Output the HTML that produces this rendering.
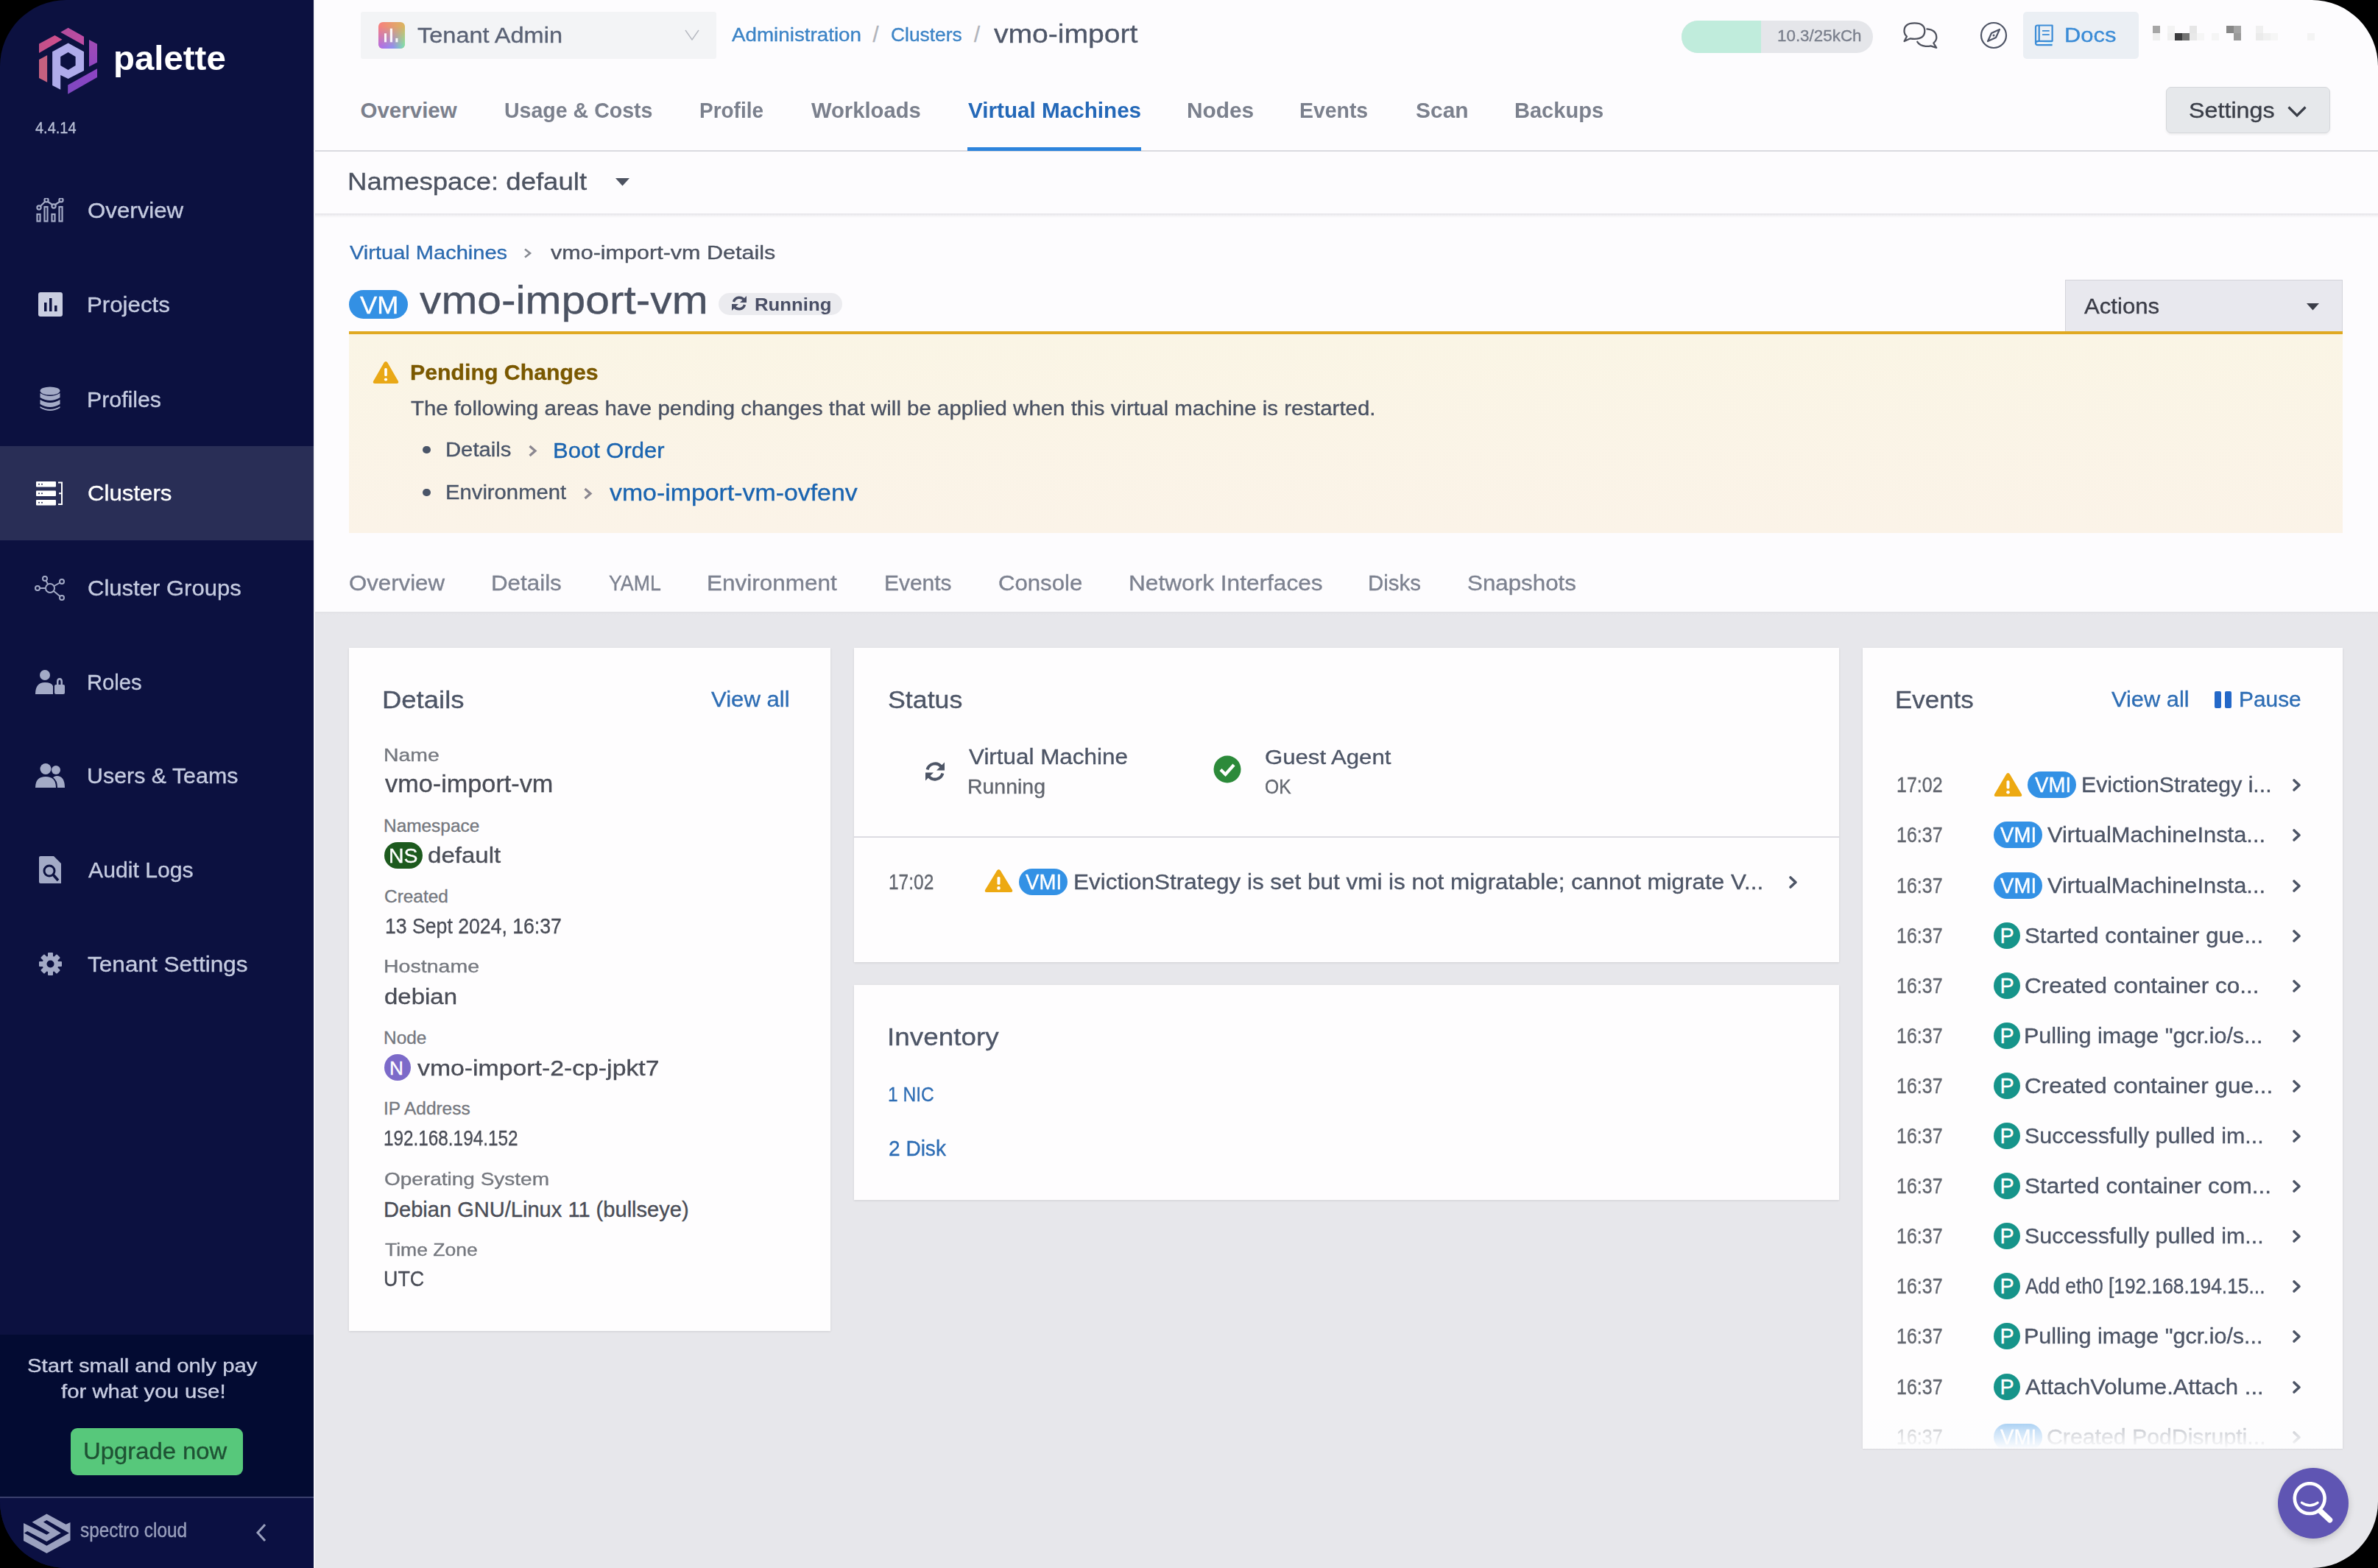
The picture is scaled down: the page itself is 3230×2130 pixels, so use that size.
<!DOCTYPE html>
<html><head><meta charset="utf-8"><style>
html,body{margin:0;padding:0;background:#000;width:3230px;height:2130px;overflow:hidden}
#win{position:absolute;left:0;top:0;width:3230px;height:2130px;border-radius:90px;overflow:hidden}
.t{position:absolute;white-space:pre;line-height:1;font-family:"Liberation Sans", sans-serif;transform-origin:0 0;-webkit-text-stroke:0.35px currentColor}
</style></head><body><div id="win">
<div style="position:absolute;left:426px;top:0px;width:2804px;height:204px;background:#fdfcfe"></div>
<div style="position:absolute;left:426px;top:204px;width:2804px;height:2px;background:#dadae0"></div>
<div style="position:absolute;left:426px;top:206px;width:2804px;height:84px;background:#fdfcfe"></div>
<div style="position:absolute;left:426px;top:290px;width:2804px;height:6px;background:linear-gradient(#e3e2e7,#f3f2f5 50%,#fdfcfe)"></div>
<div style="position:absolute;left:426px;top:296px;width:2804px;height:535px;background:#fdfcfe"></div>
<div style="position:absolute;left:426px;top:831px;width:2804px;height:1299px;background:#e7e7eb"></div>
<div style="position:absolute;left:426px;top:831px;width:2804px;height:4px;background:linear-gradient(#e1e1e5,#e7e7eb)"></div>
<div style="position:absolute;left:0px;top:0px;width:426px;height:2130px;background:#0c1140"></div>
<div style="position:absolute;left:426px;top:0px;width:1.5px;height:2130px;background:#f4f4f6"></div>
<div style="position:absolute;left:0px;top:606px;width:426px;height:128px;background:#292e56"></div>
<div style="position:absolute;left:0px;top:1813px;width:426px;height:220px;background:#030b32"></div>
<div style="position:absolute;left:0px;top:2033px;width:426px;height:2px;background:#3a3f6c"></div>
<div style="position:absolute;left:0px;top:2035px;width:426px;height:95px;background:#0b1042"></div>
<svg style="position:absolute;left:52px;top:37px;" width="80" height="92" viewBox="0 0 80 92">
<defs>
<linearGradient id="lgA" x1="0" y1="0" x2="1" y2="0"><stop offset="0" stop-color="#c25088"/><stop offset="1" stop-color="#d24f8e"/></linearGradient>
<linearGradient id="lgB" x1="0" y1="0" x2="1" y2="0"><stop offset="0" stop-color="#b24d9c"/><stop offset="1" stop-color="#bf4ca4"/></linearGradient>
<linearGradient id="lgC" x1="0" y1="0" x2="0" y2="1"><stop offset="0" stop-color="#a24cb4"/><stop offset="1" stop-color="#9046c0"/></linearGradient>
<linearGradient id="lgD" x1="0" y1="1" x2="1" y2="0"><stop offset="0" stop-color="#7e48c0"/><stop offset="1" stop-color="#8e44c4"/></linearGradient>
</defs>
<polygon points="1,22.5 22.5,11.1 32.5,16.8 1,34.9" fill="url(#lgA)"/>
<polygon points="30.2,6.7 40.6,0.7 62,12.8 62,24.5" fill="url(#lgB)"/>
<polygon points="69,17.1 80.1,22.8 80.1,47.6 69,53.6" fill="url(#lgC)"/>
<polygon points="40.2,78.4 80.1,56.3 80.1,68 40.2,90.8" fill="url(#lgD)"/>
<polygon points="1,43.9 12.1,37.9 12.1,74.7 1,69" fill="#c5607f"/>
<path d="M19.1,33.2 L40.6,21.5 L62,33.2 L62,59 L40.6,70 L30.2,65 L30.2,84.8 L19.1,79.1 Z M30.2,39.9 L40.6,33.9 L50.6,39.9 L50.6,52 L40.6,58 L30.2,52 Z" fill="#afabea" fill-rule="evenodd"/>
</svg>
<svg style="position:absolute;left:49px;top:269px;" width="38" height="33" viewBox="0 0 38 33"><g fill="none" stroke="#a3aac6" stroke-width="2.2">
<circle cx="4" cy="13" r="2.6"/><circle cx="14" cy="2.8" r="2.6"/><circle cx="24" cy="11" r="2.6"/><circle cx="34" cy="2.8" r="2.6"/>
<path d="M6,11 L12,5 M16,5 L22,9 M26,9 L32,5"/>
<rect x="1.5" y="22" width="4" height="9.5"/><rect x="11.5" y="12" width="4" height="19.5"/><rect x="21.5" y="22" width="4" height="9.5"/><rect x="31.5" y="12" width="4" height="19.5"/></g></svg>
<svg style="position:absolute;left:52px;top:397px;" width="33" height="33" viewBox="0 0 33 33"><rect x="0" y="0" width="33" height="33" rx="3" fill="#c9cde0"/>
<rect x="8" y="14" width="3.5" height="12" fill="#0c1140"/><rect x="15" y="8" width="3.5" height="18" fill="#0c1140"/><rect x="22" y="18" width="3.5" height="8" fill="#0c1140"/></svg>
<svg style="position:absolute;left:54px;top:525px;" width="28" height="34" viewBox="0 0 28 34"><g fill="#a3aac6">
<ellipse cx="14" cy="6" rx="13.5" ry="5.5"/>
<path d="M0.5,9 Q14,17 27.5,9 L27.5,15 Q14,23 0.5,15 Z"/>
<path d="M0.5,18 Q14,26 27.5,18 L27.5,24 Q14,32 0.5,24 Z"/>
<path d="M0.5,27 Q14,35 27.5,27 L27.5,29 Q14,37 0.5,29 Z"/></g></svg>
<svg style="position:absolute;left:49px;top:654px;" width="38" height="33" viewBox="0 0 38 33"><g fill="#ffffff">
<rect x="0" y="0" width="27" height="7.5" rx="1"/><rect x="0" y="12.5" width="27" height="7.5" rx="1"/><rect x="0" y="25" width="27" height="7.5" rx="1"/>
</g><g fill="#292e56"><circle cx="4" cy="3.8" r="1"/><circle cx="8" cy="3.8" r="1"/><circle cx="4" cy="16.3" r="1"/><circle cx="8" cy="16.3" r="1"/><circle cx="4" cy="28.8" r="1"/><circle cx="8" cy="28.8" r="1"/></g>
<path d="M30,1.5 L35,1.5 L35,31 L30,31 M35,16.3 L31,16.3" fill="none" stroke="#fff" stroke-width="2"/></svg>
<svg style="position:absolute;left:47px;top:782px;" width="42" height="34" viewBox="0 0 42 34"><g fill="none" stroke="#a3aac6" stroke-width="2">
<circle cx="21" cy="17" r="6"/><circle cx="14" cy="4" r="3"/><circle cx="37" cy="8" r="3"/><circle cx="4" cy="17" r="3"/><circle cx="37" cy="30" r="3"/>
<path d="M15.5,6.8 L18,11.5 M34.5,9.5 L26.5,14 M7,17 L15,17 M34.5,28 L26,21"/></g></svg>
<svg style="position:absolute;left:48px;top:910px;" width="40" height="33" viewBox="0 0 40 33"><g fill="#a3aac6">
<circle cx="13" cy="7" r="7"/><path d="M0,33 Q0,17 13,17 Q22,17 24,22 L24,33 Z"/>
<rect x="26" y="20" width="14" height="13" rx="2"/><path d="M29,20 L29,16 Q29,11 33,11 Q37,11 37,16 L37,20 L34.5,20 L34.5,16 Q34.5,13.5 33,13.5 Q31.5,13.5 31.5,16 L31.5,20 Z"/></g></svg>
<svg style="position:absolute;left:48px;top:1037px;" width="40" height="33" viewBox="0 0 40 33"><g fill="#a3aac6">
<circle cx="14" cy="7.5" r="7.5"/><circle cx="28" cy="9" r="6"/>
<path d="M0,33 Q0,18 14,18 Q28,18 28,33 Z"/><path d="M24,19 Q27,17 29,17 Q40,17 40,33 L30,33 Q30,23 24,19 Z"/></g></svg>
<svg style="position:absolute;left:53px;top:1163px;" width="30" height="37" viewBox="0 0 30 37"><path d="M2,0 L20,0 L30,10 L30,37 L2,37 Q0,37 0,35 L0,2 Q0,0 2,0 Z" fill="#a3aac6"/>
<circle cx="14" cy="20" r="7" fill="none" stroke="#0c1140" stroke-width="3"/><path d="M19,25 L26,33" stroke="#0c1140" stroke-width="3.5"/></svg>
<svg style="position:absolute;left:53px;top:1294px;" width="31" height="31" viewBox="0 0 31 31"><g fill="#a3aac6" transform="translate(15.5,15.5)">
<circle r="11"/>
<g id="t"><rect x="-3.5" y="-15.5" width="7" height="8" rx="1"/></g>
<rect x="-3.5" y="-15.5" width="7" height="8" rx="1" transform="rotate(45)"/>
<rect x="-3.5" y="-15.5" width="7" height="8" rx="1" transform="rotate(90)"/>
<rect x="-3.5" y="-15.5" width="7" height="8" rx="1" transform="rotate(135)"/>
<rect x="-3.5" y="-15.5" width="7" height="8" rx="1" transform="rotate(180)"/>
<rect x="-3.5" y="-15.5" width="7" height="8" rx="1" transform="rotate(225)"/>
<rect x="-3.5" y="-15.5" width="7" height="8" rx="1" transform="rotate(270)"/>
<rect x="-3.5" y="-15.5" width="7" height="8" rx="1" transform="rotate(315)"/>
<circle r="5" fill="#0c1140"/></g></svg>
<div style="position:absolute;left:96px;top:1940px;width:234px;height:64px;background:#57c87b;border-radius:9px"></div>
<svg style="position:absolute;left:28px;top:2052px;" width="72" height="63" viewBox="0 0 72 63"><polygon fill="#9ba1bf" points="4,16.1 15.1,16.1 35.4,4.6 61.5,18.7 67.5,16.1 67.5,40.6 35.4,57.9 4,41"/>
<polygon fill="#0b1042" points="3,15.6 15.1,15.6 39.6,30.1 35.4,32.7 3,16.5"/>
<polygon fill="#0b1042" points="30.9,15.5 35.4,13.1 65.9,30.5 35.4,47.8 4.8,30.5 9.2,28.1 35.4,42 54.8,30.5"/></svg>
<svg style="position:absolute;left:347px;top:2069px;" width="16" height="26" viewBox="0 0 16 26"><path d="M13,2 L3,13 L13,24" fill="none" stroke="#9aa0bd" stroke-width="3"/></svg>
<div style="position:absolute;left:490px;top:16px;width:483px;height:64px;background:#f3f4f6;border-radius:3px"></div>
<svg style="position:absolute;left:514px;top:30px;" width="36" height="36" viewBox="0 0 36 36"><defs><linearGradient id="tgT" x1="0" y1="0" x2="1" y2="0"><stop offset="0" stop-color="#f7807f"/><stop offset="1" stop-color="#d9b660"/></linearGradient>
<linearGradient id="tgB" x1="0" y1="0" x2="1" y2="0"><stop offset="0" stop-color="#b46ae6"/><stop offset="0.55" stop-color="#8f90ee"/><stop offset="1" stop-color="#7ae6aa"/></linearGradient>
<linearGradient id="tgM" x1="0" y1="0" x2="0" y2="1"><stop offset="0.15" stop-color="#000"/><stop offset="0.95" stop-color="#fff"/></linearGradient>
<mask id="tmask"><rect width="36" height="36" fill="url(#tgM)"/></mask></defs>
<rect width="36" height="36" rx="6" fill="url(#tgT)"/><rect width="36" height="36" rx="6" fill="url(#tgB)" mask="url(#tmask)"/>
<rect x="8" y="15.3" width="3" height="12" fill="#fff" opacity="0.92"/><rect x="15.8" y="8.7" width="3.2" height="18.6" fill="#fff" opacity="0.92"/><rect x="23.4" y="21.9" width="3" height="5.4" fill="#fff" opacity="0.92"/></svg>
<svg style="position:absolute;left:930px;top:40px;" width="20" height="15" viewBox="0 0 20 15"><path d="M1,1 L10,14 L19,1" fill="none" stroke="#b5b8c0" stroke-width="1.4"/></svg>
<div style="position:absolute;left:2284px;top:28px;width:260px;height:44px;background:#e5e6ea;border-radius:22px;overflow:hidden"></div>
<div style="position:absolute;left:2284px;top:28px;width:108px;height:44px;background:#c0ecdc;border-radius:22px 0 0 22px"></div>
<svg style="position:absolute;left:2585px;top:29px;" width="48" height="38" viewBox="0 0 48 38"><g fill="none" stroke="#50535f" stroke-width="2.3" stroke-linejoin="round" stroke-linecap="round">
<path d="M5,20.5 Q1.5,17.5 1.5,13 Q1.5,2.3 15.5,2.3 Q29.3,2.3 29.3,13 Q29.3,23.8 15.5,23.8 Q12.5,23.8 9.8,23.3 L1.6,27 Z"/>
<path d="M32.4,10.3 Q45.3,11.5 45.3,22 Q45.3,26 41.3,29.5 L45.2,35.8 L37.5,33.3 Q34,34.2 30.5,33.8 Q22.5,33 19.3,27.8"/></g></svg>
<svg style="position:absolute;left:2689px;top:29px;" width="38" height="38" viewBox="0 0 38 38"><circle cx="19" cy="19" r="17" fill="none" stroke="#4f5566" stroke-width="2.2"/>
<path d="M27,11 L22,22 L11,27 L16,16 Z" fill="none" stroke="#4f5566" stroke-width="2.2" stroke-linejoin="round"/><circle cx="19" cy="19" r="1.5" fill="#4f5566"/></svg>
<div style="position:absolute;left:2748px;top:16px;width:157px;height:64px;background:#ebeff4;border-radius:5px"></div>
<svg style="position:absolute;left:2763px;top:33px;" width="27" height="30" viewBox="0 0 27 30"><path d="M6.7,22.8 L24.6,22.8 L24.6,27.5" fill="#c9ecfb" stroke="none"/><g fill="none" stroke="#3a8bd6" stroke-width="2.2" stroke-linejoin="round">
<path d="M4.5,1.5 L24.6,1.5 L24.6,22.8 L6,22.8 Q2,22.8 2,25.5 Q2,28.1 5,28.1 L24.6,28.1 M2,25.5 L2,4 Q2,1.5 4.5,1.5"/>
<path d="M6.7,1.5 L6.7,22.8"/><path d="M11,8.8 L20.7,8.8 M11,14.1 L20.7,14.1" stroke-width="1.8"/></g></svg>
<div style="position:absolute;left:2924px;top:35px;width:10px;height:10px;background:#a6a6a6"></div>
<div style="position:absolute;left:2924px;top:45px;width:10px;height:10px;background:#efefef"></div>
<div style="position:absolute;left:2944px;top:35px;width:10px;height:10px;background:#f3f3f3"></div>
<div style="position:absolute;left:2944px;top:45px;width:10px;height:10px;background:#f0f0f0"></div>
<div style="position:absolute;left:2954px;top:45px;width:10px;height:10px;background:#3c3c3e"></div>
<div style="position:absolute;left:2964px;top:45px;width:10px;height:10px;background:#737373"></div>
<div style="position:absolute;left:2974px;top:35px;width:10px;height:10px;background:#e6e6e6"></div>
<div style="position:absolute;left:2974px;top:45px;width:10px;height:10px;background:#e9e9e9"></div>
<div style="position:absolute;left:2984px;top:45px;width:10px;height:10px;background:#f6f6f6"></div>
<div style="position:absolute;left:3004px;top:45px;width:10px;height:10px;background:#f5f5f5"></div>
<div style="position:absolute;left:3024px;top:35px;width:10px;height:10px;background:#878787"></div>
<div style="position:absolute;left:3034px;top:35px;width:10px;height:10px;background:#a4a4a4"></div>
<div style="position:absolute;left:3034px;top:45px;width:10px;height:10px;background:#9a9a9a"></div>
<div style="position:absolute;left:3064px;top:35px;width:10px;height:10px;background:#f0f0f0"></div>
<div style="position:absolute;left:3064px;top:45px;width:10px;height:10px;background:#ebebeb"></div>
<div style="position:absolute;left:3074px;top:45px;width:10px;height:10px;background:#f1f1f1"></div>
<div style="position:absolute;left:3084px;top:45px;width:10px;height:10px;background:#f6f6f6"></div>
<div style="position:absolute;left:3134px;top:45px;width:10px;height:10px;background:#f4f4f4"></div>
<div style="position:absolute;left:1314px;top:200px;width:236px;height:5px;background:#2d84dc"></div>
<div style="position:absolute;left:2942px;top:118px;width:223px;height:63px;background:#e6e8eb;border:1.5px solid #d5d7db;border-radius:7px;box-sizing:border-box;box-shadow:0 2px 3px rgba(0,0,0,0.06)"></div>
<svg style="position:absolute;left:3106px;top:143px;" width="28" height="17" viewBox="0 0 28 17"><path d="M2.5,2.5 L14,14 L25.5,2.5" fill="none" stroke="#3a3e48" stroke-width="3.2"/></svg>
<svg style="position:absolute;left:836px;top:242px;" width="20" height="11" viewBox="0 0 20 11"><path d="M0,0 L19,0 L9.5,10.5 Z" fill="#4d5361"/></svg>
<svg style="position:absolute;left:711px;top:337px;" width="12" height="14" viewBox="0 0 12 14"><path d="M2,1.5 L9,7 L2,12.5" fill="none" stroke="#888b93" stroke-width="2.6"/></svg>
<div style="position:absolute;left:474px;top:394px;width:80px;height:39px;background:#3390e4;border-radius:20px"></div>
<div style="position:absolute;left:976px;top:398px;width:168px;height:30px;background:#ebebef;border-radius:15px"></div>
<svg style="position:absolute;left:992px;top:400px;" width="24" height="24" viewBox="0 0 24 24"><g fill="none" stroke="#4a4f66" stroke-width="3.4"><path d="M4.5,10 A8,8 0 0 1 19,8"/><path d="M19.5,14 A8,8 0 0 1 5,16"/></g>
<path d="M22,2 L22,11 L13,11 Z" fill="#4a4f66"/><path d="M2,22 L2,13 L11,13 Z" fill="#4a4f66"/></svg>
<div style="position:absolute;left:2805px;top:380px;width:377px;height:74px;background:#e8e8ee;border:1.5px solid #d3d3da;border-bottom:none;box-sizing:border-box"></div>
<svg style="position:absolute;left:3133px;top:412px;" width="18" height="10" viewBox="0 0 18 10"><path d="M0,0 L17,0 L8.5,9.5 Z" fill="#3b3d48"/></svg>
<div style="position:absolute;left:474px;top:450px;width:2708px;height:4.5px;background:#e0a920"></div>
<div style="position:absolute;left:474px;top:454px;width:2708px;height:270px;background:linear-gradient(#faf5e5,#fbf3e8)"></div>
<svg style="position:absolute;left:506px;top:490px;" width="36" height="32" viewBox="0 0 36 32"><path d="M18,1 Q19.5,1 20.5,2.8 L35,28 Q36,31 33,31 L3,31 Q0,31 1,28 L15.5,2.8 Q16.5,1 18,1 Z" fill="#e9a816"/>
<rect x="16.2" y="10" width="3.6" height="11" rx="1.5" fill="#fff"/><circle cx="18" cy="25.5" r="2.1" fill="#fff"/></svg>
<div style="position:absolute;left:574px;top:605.8px;width:10.5px;height:10.5px;background:#4a5568;border-radius:50%"></div>
<div style="position:absolute;left:574px;top:663.5px;width:10.5px;height:10.5px;background:#4a5568;border-radius:50%"></div>
<svg style="position:absolute;left:717px;top:604px;" width="13" height="17" viewBox="0 0 13 17"><path d="M2.5,2 L10,8.5 L2.5,15" fill="none" stroke="#8b8790" stroke-width="3.2"/></svg>
<svg style="position:absolute;left:792px;top:662px;" width="13" height="17" viewBox="0 0 13 17"><path d="M2.5,2 L10,8.5 L2.5,15" fill="none" stroke="#8b8790" stroke-width="3.2"/></svg>
<div style="position:absolute;left:474px;top:880px;width:654px;height:928px;background:#fefdfe;box-shadow:0 1px 3px rgba(0,0,0,0.10)"></div>
<div style="position:absolute;left:1160px;top:880px;width:1338px;height:427px;background:#fefdfe;box-shadow:0 1px 3px rgba(0,0,0,0.10)"></div>
<div style="position:absolute;left:1160px;top:1338px;width:1338px;height:292px;background:#fefdfe;box-shadow:0 1px 3px rgba(0,0,0,0.10)"></div>
<div style="position:absolute;left:2530px;top:880px;width:652px;height:1088px;background:#fefdfe;box-shadow:0 1px 3px rgba(0,0,0,0.10)"></div>
<div style="position:absolute;left:522px;top:1144px;width:52px;height:36px;background:#1d5a1e;border-radius:18px"></div>
<div style="position:absolute;left:522px;top:1432px;width:36px;height:36px;background:#7c6ac9;border-radius:50%"></div>
<svg style="position:absolute;left:1255px;top:1033px;" width="30" height="30" viewBox="0 0 30 30"><g fill="none" stroke="#4d5566" stroke-width="4"><path d="M4.6,12.5 A10.8,10.8 0 0 1 23.5,8.5"/><path d="M25.4,17.5 A10.8,10.8 0 0 1 6.5,21.5"/></g>
<path d="M28,2.5 L28,13.5 L17,13.5 Z" fill="#4d5566"/><path d="M2,27.5 L2,16.5 L13,16.5 Z" fill="#4d5566"/></svg>
<svg style="position:absolute;left:1648px;top:1026px;" width="38" height="38" viewBox="0 0 38 38"><circle cx="19" cy="19" r="18.5" fill="#2c8a3a"/><path d="M10,19.5 L16.5,26 L28,13" fill="none" stroke="#fff" stroke-width="4.2"/></svg>
<div style="position:absolute;left:1160px;top:1136px;width:1338px;height:2px;background:#dcdce2"></div>
<svg style="position:absolute;left:1337px;top:1180px;" width="39" height="33" viewBox="0 0 39 33"><path d="M19.5,1 Q21.0,1 22.0,2.8 L38,29 Q39,32 36,32 L3,32 Q0,32 1,29 L17.0,2.8 Q18.0,1 19.5,1 Z" fill="#eda912"/>
<rect x="17.5" y="10.89" width="4" height="10.89" rx="1.6" fill="#fff"/><circle cx="19.5" cy="26.400000000000002" r="2.3" fill="#fff"/></svg>
<div style="position:absolute;left:1384px;top:1180px;width:66px;height:36px;background:#3391e5;border-radius:18px"></div>
<svg style="position:absolute;left:2428px;top:1189px;" width="15" height="19" viewBox="0 0 15 19"><path d="M4,3 L11,9.5 L4,16" fill="none" stroke="#4d5566" stroke-width="3.6" stroke-linecap="round" stroke-linejoin="round"/></svg>
<div style="position:absolute;left:3008px;top:939px;width:9px;height:23px;background:#2468c8;border-radius:2px"></div>
<div style="position:absolute;left:3022px;top:939px;width:9px;height:23px;background:#2468c8;border-radius:2px"></div>
<svg style="position:absolute;left:2708px;top:1049.3px;" width="39" height="34" viewBox="0 0 39 34"><path d="M19.5,1 Q21.0,1 22.0,2.8 L38,30 Q39,33 36,33 L3,33 Q0,33 1,30 L17.0,2.8 Q18.0,1 19.5,1 Z" fill="#eda912"/>
<rect x="17.5" y="11.22" width="4" height="11.22" rx="1.6" fill="#fff"/><circle cx="19.5" cy="27.200000000000003" r="2.3" fill="#fff"/></svg>
<div style="position:absolute;left:2754px;top:1048.3px;width:66px;height:36px;background:#3391e5;border-radius:18px"></div>
<svg style="position:absolute;left:3112px;top:1057.3px;" width="15" height="19" viewBox="0 0 15 19"><path d="M4,3 L11,9.5 L4,16" fill="none" stroke="#4d5566" stroke-width="3.6" stroke-linecap="round" stroke-linejoin="round"/></svg>
<div style="position:absolute;left:2707.6px;top:1116.3999999999999px;width:66px;height:36px;background:#3391e5;border-radius:18px"></div>
<svg style="position:absolute;left:3112px;top:1125.3999999999999px;" width="15" height="19" viewBox="0 0 15 19"><path d="M4,3 L11,9.5 L4,16" fill="none" stroke="#4d5566" stroke-width="3.6" stroke-linecap="round" stroke-linejoin="round"/></svg>
<div style="position:absolute;left:2707.6px;top:1184.5px;width:66px;height:36px;background:#3391e5;border-radius:18px"></div>
<svg style="position:absolute;left:3112px;top:1193.5px;" width="15" height="19" viewBox="0 0 15 19"><path d="M4,3 L11,9.5 L4,16" fill="none" stroke="#4d5566" stroke-width="3.6" stroke-linecap="round" stroke-linejoin="round"/></svg>
<div style="position:absolute;left:2707.6px;top:1252.6px;width:36px;height:36px;background:#16948a;border-radius:50%"></div>
<svg style="position:absolute;left:3112px;top:1261.6px;" width="15" height="19" viewBox="0 0 15 19"><path d="M4,3 L11,9.5 L4,16" fill="none" stroke="#4d5566" stroke-width="3.6" stroke-linecap="round" stroke-linejoin="round"/></svg>
<div style="position:absolute;left:2707.6px;top:1320.6999999999998px;width:36px;height:36px;background:#16948a;border-radius:50%"></div>
<svg style="position:absolute;left:3112px;top:1329.6999999999998px;" width="15" height="19" viewBox="0 0 15 19"><path d="M4,3 L11,9.5 L4,16" fill="none" stroke="#4d5566" stroke-width="3.6" stroke-linecap="round" stroke-linejoin="round"/></svg>
<div style="position:absolute;left:2707.6px;top:1388.8px;width:36px;height:36px;background:#16948a;border-radius:50%"></div>
<svg style="position:absolute;left:3112px;top:1397.8px;" width="15" height="19" viewBox="0 0 15 19"><path d="M4,3 L11,9.5 L4,16" fill="none" stroke="#4d5566" stroke-width="3.6" stroke-linecap="round" stroke-linejoin="round"/></svg>
<div style="position:absolute;left:2707.6px;top:1456.8999999999999px;width:36px;height:36px;background:#16948a;border-radius:50%"></div>
<svg style="position:absolute;left:3112px;top:1465.8999999999999px;" width="15" height="19" viewBox="0 0 15 19"><path d="M4,3 L11,9.5 L4,16" fill="none" stroke="#4d5566" stroke-width="3.6" stroke-linecap="round" stroke-linejoin="round"/></svg>
<div style="position:absolute;left:2707.6px;top:1525.0px;width:36px;height:36px;background:#16948a;border-radius:50%"></div>
<svg style="position:absolute;left:3112px;top:1534.0px;" width="15" height="19" viewBox="0 0 15 19"><path d="M4,3 L11,9.5 L4,16" fill="none" stroke="#4d5566" stroke-width="3.6" stroke-linecap="round" stroke-linejoin="round"/></svg>
<div style="position:absolute;left:2707.6px;top:1593.1px;width:36px;height:36px;background:#16948a;border-radius:50%"></div>
<svg style="position:absolute;left:3112px;top:1602.1px;" width="15" height="19" viewBox="0 0 15 19"><path d="M4,3 L11,9.5 L4,16" fill="none" stroke="#4d5566" stroke-width="3.6" stroke-linecap="round" stroke-linejoin="round"/></svg>
<div style="position:absolute;left:2707.6px;top:1661.1999999999998px;width:36px;height:36px;background:#16948a;border-radius:50%"></div>
<svg style="position:absolute;left:3112px;top:1670.1999999999998px;" width="15" height="19" viewBox="0 0 15 19"><path d="M4,3 L11,9.5 L4,16" fill="none" stroke="#4d5566" stroke-width="3.6" stroke-linecap="round" stroke-linejoin="round"/></svg>
<div style="position:absolute;left:2707.6px;top:1729.3px;width:36px;height:36px;background:#16948a;border-radius:50%"></div>
<svg style="position:absolute;left:3112px;top:1738.3px;" width="15" height="19" viewBox="0 0 15 19"><path d="M4,3 L11,9.5 L4,16" fill="none" stroke="#4d5566" stroke-width="3.6" stroke-linecap="round" stroke-linejoin="round"/></svg>
<div style="position:absolute;left:2707.6px;top:1797.3999999999999px;width:36px;height:36px;background:#16948a;border-radius:50%"></div>
<svg style="position:absolute;left:3112px;top:1806.3999999999999px;" width="15" height="19" viewBox="0 0 15 19"><path d="M4,3 L11,9.5 L4,16" fill="none" stroke="#4d5566" stroke-width="3.6" stroke-linecap="round" stroke-linejoin="round"/></svg>
<div style="position:absolute;left:2707.6px;top:1865.5px;width:36px;height:36px;background:#16948a;border-radius:50%"></div>
<svg style="position:absolute;left:3112px;top:1874.5px;" width="15" height="19" viewBox="0 0 15 19"><path d="M4,3 L11,9.5 L4,16" fill="none" stroke="#4d5566" stroke-width="3.6" stroke-linecap="round" stroke-linejoin="round"/></svg>
<div style="position:absolute;left:2707.6px;top:1933.6px;width:66px;height:36px;background:#3391e5;border-radius:18px"></div>
<svg style="position:absolute;left:3112px;top:1942.6px;" width="15" height="19" viewBox="0 0 15 19"><path d="M4,3 L11,9.5 L4,16" fill="none" stroke="#4d5566" stroke-width="3.6" stroke-linecap="round" stroke-linejoin="round"/></svg>
<span class="t" style="left:154.0px;top:55.7px;font-size:46.75px;font-weight:700;color:#ffffff;transform:scaleX(1.0137);-webkit-text-stroke:0">palette</span>
<span class="t" style="left:48.0px;top:163.0px;font-size:22.53px;font-weight:400;color:#b8bfd6;transform:scaleX(0.8871)">4.4.14</span>
<span class="t" style="left:119.3px;top:271.0px;font-size:29.65px;font-weight:400;color:#c5cbe0;transform:scaleX(1.0537)">Overview</span>
<span class="t" style="left:118.3px;top:399.0px;font-size:29.65px;font-weight:400;color:#c5cbe0;transform:scaleX(1.0538)">Projects</span>
<span class="t" style="left:118.4px;top:527.6px;font-size:29.65px;font-weight:400;color:#c5cbe0;transform:scaleX(1.0219)">Profiles</span>
<span class="t" style="left:119.3px;top:655.3px;font-size:29.65px;font-weight:400;color:#ffffff;transform:scaleX(1.0523)">Clusters</span>
<span class="t" style="left:119.4px;top:783.5px;font-size:29.65px;font-weight:400;color:#c5cbe0;transform:scaleX(1.0472)">Cluster Groups</span>
<span class="t" style="left:118.4px;top:912.0px;font-size:29.65px;font-weight:400;color:#c5cbe0;transform:scaleX(0.9849)">Roles</span>
<span class="t" style="left:118.4px;top:1039.0px;font-size:29.65px;font-weight:400;color:#c5cbe0;transform:scaleX(1.0249)">Users &amp; Teams</span>
<span class="t" style="left:120.4px;top:1167.3px;font-size:29.65px;font-weight:400;color:#c5cbe0;transform:scaleX(1.0187)">Audit Logs</span>
<span class="t" style="left:119.3px;top:1295.3px;font-size:29.65px;font-weight:400;color:#c5cbe0;transform:scaleX(1.0649)">Tenant Settings</span>
<span class="t" style="left:36.8px;top:1843.4px;font-size:25.29px;font-weight:400;color:#c8cde2;transform:scaleX(1.1576)">Start small and only pay</span>
<span class="t" style="left:83.0px;top:1878.4px;font-size:25.29px;font-weight:400;color:#c8cde2;transform:scaleX(1.1611)">for what you use!</span>
<span class="t" style="left:113.4px;top:1956.0px;font-size:30.52px;font-weight:400;color:#1f5234;transform:scaleX(1.0756)">Upgrade now</span>
<span class="t" style="left:108.5px;top:2065.0px;font-size:27.26px;font-weight:400;color:#9aa0bd;transform:scaleX(0.8956)">spectro cloud</span>
<span class="t" style="left:566.9px;top:33.1px;font-size:30.23px;font-weight:400;color:#5a6275;transform:scaleX(1.0756)">Tenant Admin</span>
<span class="t" style="left:994.0px;top:33.9px;font-size:26.02px;font-weight:400;color:#3d84c6;transform:scaleX(1.0675)">Administration</span>
<span class="t" style="left:1185.6px;top:33.0px;font-size:29.07px;font-weight:400;color:#b0b3ba">/</span>
<span class="t" style="left:1209.7px;top:33.9px;font-size:26.02px;font-weight:400;color:#3d84c6;transform:scaleX(1.0138)">Clusters</span>
<span class="t" style="left:1323.0px;top:33.0px;font-size:29.07px;font-weight:400;color:#b0b3ba">/</span>
<span class="t" style="left:1349.5px;top:28.6px;font-size:35.58px;font-weight:500;color:#4f5769;transform:scaleX(1.0983)">vmo-import</span>
<span class="t" style="left:2413.6px;top:39.0px;font-size:21.37px;font-weight:400;color:#7a7f8c;transform:scaleX(1.0481)">10.3/25kCh</span>
<span class="t" style="left:2803.8px;top:33.2px;font-size:28.2px;font-weight:400;color:#3a8bd6;transform:scaleX(1.0968)">Docs</span>
<span class="t" style="left:489.5px;top:135.2px;font-size:29.51px;font-weight:700;color:#7b808d;-webkit-text-stroke:0">Overview</span>
<span class="t" style="left:684.7px;top:135.2px;font-size:29.51px;font-weight:700;color:#7b808d;transform:scaleX(0.9678);-webkit-text-stroke:0">Usage &amp; Costs</span>
<span class="t" style="left:949.8px;top:135.2px;font-size:29.51px;font-weight:700;color:#7b808d;transform:scaleX(0.9472);-webkit-text-stroke:0">Profile</span>
<span class="t" style="left:1102.0px;top:135.2px;font-size:29.51px;font-weight:700;color:#7b808d;transform:scaleX(0.9899);-webkit-text-stroke:0">Workloads</span>
<span class="t" style="left:1314.7px;top:135.2px;font-size:29.51px;font-weight:700;color:#2468b8;transform:scaleX(1.0052);-webkit-text-stroke:0">Virtual Machines</span>
<span class="t" style="left:1612.0px;top:135.2px;font-size:29.51px;font-weight:700;color:#7b808d;transform:scaleX(1.0115);-webkit-text-stroke:0">Nodes</span>
<span class="t" style="left:1765.4px;top:135.2px;font-size:29.51px;font-weight:700;color:#7b808d;transform:scaleX(0.9628);-webkit-text-stroke:0">Events</span>
<span class="t" style="left:1922.8px;top:135.2px;font-size:29.51px;font-weight:700;color:#7b808d;transform:scaleX(1.0162);-webkit-text-stroke:0">Scan</span>
<span class="t" style="left:2056.6px;top:135.2px;font-size:29.51px;font-weight:700;color:#7b808d;transform:scaleX(0.9842);-webkit-text-stroke:0">Backups</span>
<span class="t" style="left:2972.9px;top:135.8px;font-size:28.78px;font-weight:400;color:#3a3e48;transform:scaleX(1.1216)">Settings</span>
<span class="t" style="left:472.2px;top:230.0px;font-size:33.43px;font-weight:400;color:#4d5361;transform:scaleX(1.0935)">Namespace: default</span>
<span class="t" style="left:475.0px;top:329.7px;font-size:26.45px;font-weight:400;color:#2d6bb0;transform:scaleX(1.0979)">Virtual Machines</span>
<span class="t" style="left:747.6px;top:329.7px;font-size:26.45px;font-weight:400;color:#4d5361;transform:scaleX(1.1545)">vmo-import-vm Details</span>
<span class="t" style="left:488.7px;top:397.5px;font-size:33.43px;font-weight:400;color:#ffffff;transform:scaleX(1.0417)">VM</span>
<span class="t" style="left:569.5px;top:380.5px;font-size:53.0px;font-weight:400;color:#4b5262;transform:scaleX(1.1086)">vmo-import-vm</span>
<span class="t" style="left:1024.7px;top:401.6px;font-size:23.84px;font-weight:700;color:#4a4f66;transform:scaleX(1.0806);-webkit-text-stroke:0">Running</span>
<span class="t" style="left:2830.5px;top:402.0px;font-size:28.78px;font-weight:400;color:#3b3d48;transform:scaleX(1.0819)">Actions</span>
<span class="t" style="left:556.6px;top:491.0px;font-size:29.8px;font-weight:700;color:#7a5800;transform:scaleX(1.0161)">Pending Changes</span>
<span class="t" style="left:557.5px;top:540.7px;font-size:27.18px;font-weight:400;color:#4a5263;transform:scaleX(1.0832)">The following areas have pending changes that will be applied when this virtual machine is restarted.</span>
<span class="t" style="left:605.1px;top:596.0px;font-size:28.2px;font-weight:400;color:#4a5568;transform:scaleX(1.0373)">Details</span>
<span class="t" style="left:750.9px;top:596.7px;font-size:29.36px;font-weight:400;color:#1a64b0;transform:scaleX(1.0553)">Boot Order</span>
<span class="t" style="left:605.1px;top:654.2px;font-size:28.2px;font-weight:400;color:#4a5568;transform:scaleX(1.0372)">Environment</span>
<span class="t" style="left:827.8px;top:653.6px;font-size:31.8px;font-weight:400;color:#1a64b0;transform:scaleX(1.0646)">vmo-import-vm-ovfenv</span>
<span class="t" style="left:473.6px;top:778.1px;font-size:29.07px;font-weight:400;color:#7d8290;transform:scaleX(1.0725)">Overview</span>
<span class="t" style="left:666.8px;top:778.1px;font-size:29.07px;font-weight:400;color:#7d8290;transform:scaleX(1.0779)">Details</span>
<span class="t" style="left:827.1px;top:778.1px;font-size:29.07px;font-weight:400;color:#7d8290;transform:scaleX(0.92)">YAML</span>
<span class="t" style="left:960.3px;top:778.1px;font-size:29.07px;font-weight:400;color:#7d8290;transform:scaleX(1.0839)">Environment</span>
<span class="t" style="left:1200.6px;top:778.1px;font-size:29.07px;font-weight:400;color:#7d8290;transform:scaleX(1.0302)">Events</span>
<span class="t" style="left:1356.1px;top:778.1px;font-size:29.07px;font-weight:400;color:#7d8290;transform:scaleX(1.0714)">Console</span>
<span class="t" style="left:1533.0px;top:778.1px;font-size:29.07px;font-weight:400;color:#7d8290;transform:scaleX(1.0883)">Network Interfaces</span>
<span class="t" style="left:1858.0px;top:778.1px;font-size:29.07px;font-weight:400;color:#7d8290;transform:scaleX(1.0118)">Disks</span>
<span class="t" style="left:1992.9px;top:778.1px;font-size:29.07px;font-weight:400;color:#7d8290;transform:scaleX(1.077)">Snapshots</span>
<span class="t" style="left:519.3px;top:934.0px;font-size:33.14px;font-weight:400;color:#4d5566;transform:scaleX(1.101)">Details</span>
<span class="t" style="left:965.8px;top:935.0px;font-size:29.51px;font-weight:400;color:#2e6db4;transform:scaleX(1.0545)">View all</span>
<span class="t" style="left:520.7px;top:1014.0px;font-size:24.42px;font-weight:400;color:#75787f;transform:scaleX(1.1645)">Name</span>
<span class="t" style="left:521.0px;top:1110.0px;font-size:24.42px;font-weight:400;color:#75787f">Namespace</span>
<span class="t" style="left:522.0px;top:1205.7px;font-size:24.42px;font-weight:400;color:#75787f">Created</span>
<span class="t" style="left:520.7px;top:1301.4px;font-size:24.42px;font-weight:400;color:#75787f;transform:scaleX(1.1694)">Hostname</span>
<span class="t" style="left:521.0px;top:1397.8px;font-size:24.42px;font-weight:400;color:#75787f">Node</span>
<span class="t" style="left:521.0px;top:1494.1px;font-size:24.42px;font-weight:400;color:#75787f">IP Address</span>
<span class="t" style="left:521.9px;top:1590.0px;font-size:24.42px;font-weight:400;color:#75787f;transform:scaleX(1.1466)">Operating System</span>
<span class="t" style="left:523.0px;top:1686.4px;font-size:24.42px;font-weight:400;color:#75787f;transform:scaleX(1.087)">Time Zone</span>
<span class="t" style="left:523.0px;top:1048.0px;font-size:33.5px;font-weight:400;color:#4a4d57;transform:scaleX(1.0226)">vmo-import-vm</span>
<span class="t" style="left:581.2px;top:1147.2px;font-size:29.36px;font-weight:400;color:#4a4d57;transform:scaleX(1.1264)">default</span>
<span class="t" style="left:522.5px;top:1243.9px;font-size:29.07px;font-weight:400;color:#4a4d57;transform:scaleX(0.9162)">13 Sept 2024, 16:37</span>
<span class="t" style="left:521.9px;top:1339.9px;font-size:29.07px;font-weight:400;color:#4a4d57;transform:scaleX(1.1341)">debian</span>
<span class="t" style="left:566.6px;top:1437.0px;font-size:29.07px;font-weight:400;color:#4a4d57;transform:scaleX(1.1623)">vmo-import-2-cp-jpkt7</span>
<span class="t" style="left:521.3px;top:1532.2px;font-size:29.07px;font-weight:400;color:#4a4d57;transform:scaleX(0.8363)">192.168.194.152</span>
<span class="t" style="left:521.0px;top:1628.5px;font-size:29.07px;font-weight:400;color:#4a4d57">Debian GNU/Linux 11 (bullseye)</span>
<span class="t" style="left:521.1px;top:1723.2px;font-size:28.78px;font-weight:400;color:#4a4d57;transform:scaleX(0.9339)">UTC</span>
<span class="t" style="left:527.9px;top:1149.0px;font-size:27.62px;font-weight:400;color:#ffffff;transform:scaleX(1.0286)">NS</span>
<span class="t" style="left:529.0px;top:1438.0px;font-size:26.16px;font-weight:400;color:#ffffff">N</span>
<span class="t" style="left:1205.9px;top:933.7px;font-size:33.14px;font-weight:400;color:#4d5566;transform:scaleX(1.0791)">Status</span>
<span class="t" style="left:1315.7px;top:1013.6px;font-size:28.78px;font-weight:400;color:#4d5566;transform:scaleX(1.0919)">Virtual Machine</span>
<span class="t" style="left:1314.4px;top:1054.9px;font-size:27.47px;font-weight:400;color:#62666f;transform:scaleX(1.0354)">Running</span>
<span class="t" style="left:1717.7px;top:1013.6px;font-size:28.34px;font-weight:400;color:#4d5566;transform:scaleX(1.0994)">Guest Agent</span>
<span class="t" style="left:1717.9px;top:1054.6px;font-size:27.47px;font-weight:400;color:#62666f;transform:scaleX(0.8974)">OK</span>
<span class="t" style="left:1206.6px;top:1183.8px;font-size:28.78px;font-weight:400;color:#62666f;transform:scaleX(0.8507)">17:02</span>
<span class="t" style="left:1393.4px;top:1183.8px;font-size:28.78px;font-weight:400;color:#ffffff;transform:scaleX(0.9592)">VMI</span>
<span class="t" style="left:1457.8px;top:1183.8px;font-size:28.78px;font-weight:400;color:#4d5566;transform:scaleX(1.093)">EvictionStrategy is set but vmi is not migratable; cannot migrate V...</span>
<span class="t" style="left:1205.0px;top:1391.8px;font-size:32.99px;font-weight:400;color:#4d5566;transform:scaleX(1.1173)">Inventory</span>
<span class="t" style="left:1206.0px;top:1471.8px;font-size:28.49px;font-weight:400;color:#2e6db4;transform:scaleX(0.8614)">1 NIC</span>
<span class="t" style="left:1206.7px;top:1545.9px;font-size:28.78px;font-weight:400;color:#2e6db4;transform:scaleX(0.9747)">2 Disk</span>
<span class="t" style="left:2574.3px;top:934.0px;font-size:33.14px;font-weight:400;color:#4d5566;transform:scaleX(1.0546)">Events</span>
<span class="t" style="left:2868.2px;top:935.0px;font-size:29.51px;font-weight:400;color:#2e6db4;transform:scaleX(1.0444)">View all</span>
<span class="t" style="left:3041.0px;top:935.0px;font-size:29.51px;font-weight:400;color:#2e6db4;transform:scaleX(1.0123)">Pause</span>
<span class="t" style="left:2575.8px;top:1052.3px;font-size:28.78px;font-weight:400;color:#62666f;transform:scaleX(0.8696)">17:02</span>
<span class="t" style="left:2826.8px;top:1052.3px;font-size:28.78px;font-weight:400;color:#4d5566;transform:scaleX(1.05)">EvictionStrategy i...</span>
<span class="t" style="left:2763.5px;top:1052.3px;font-size:28.78px;font-weight:400;color:#ffffff;transform:scaleX(0.9592)">VMI</span>
<span class="t" style="left:2575.8px;top:1120.4px;font-size:28.78px;font-weight:400;color:#62666f;transform:scaleX(0.8696)">16:37</span>
<span class="t" style="left:2780.6px;top:1120.4px;font-size:28.78px;font-weight:400;color:#4d5566;transform:scaleX(1.0723)">VirtualMachineInsta...</span>
<span class="t" style="left:2717.1px;top:1120.4px;font-size:28.78px;font-weight:400;color:#ffffff;transform:scaleX(0.9592)">VMI</span>
<span class="t" style="left:2575.8px;top:1188.5px;font-size:28.78px;font-weight:400;color:#62666f;transform:scaleX(0.8696)">16:37</span>
<span class="t" style="left:2780.6px;top:1188.5px;font-size:28.78px;font-weight:400;color:#4d5566;transform:scaleX(1.0723)">VirtualMachineInsta...</span>
<span class="t" style="left:2717.1px;top:1188.5px;font-size:28.78px;font-weight:400;color:#ffffff;transform:scaleX(0.9592)">VMI</span>
<span class="t" style="left:2575.8px;top:1256.6px;font-size:28.78px;font-weight:400;color:#62666f;transform:scaleX(0.8696)">16:37</span>
<span class="t" style="left:2750.3px;top:1256.6px;font-size:28.78px;font-weight:400;color:#4d5566;transform:scaleX(1.0841)">Started container gue...</span>
<span class="t" style="left:2716.6px;top:1256.6px;font-size:28.78px;font-weight:400;color:#ffffff">P</span>
<span class="t" style="left:2575.8px;top:1324.7px;font-size:28.78px;font-weight:400;color:#62666f;transform:scaleX(0.8696)">16:37</span>
<span class="t" style="left:2750.3px;top:1324.7px;font-size:28.78px;font-weight:400;color:#4d5566;transform:scaleX(1.0941)">Created container co...</span>
<span class="t" style="left:2716.6px;top:1324.7px;font-size:28.78px;font-weight:400;color:#ffffff">P</span>
<span class="t" style="left:2575.8px;top:1392.8px;font-size:28.78px;font-weight:400;color:#62666f;transform:scaleX(0.8696)">16:37</span>
<span class="t" style="left:2749.3px;top:1392.8px;font-size:28.78px;font-weight:400;color:#4d5566;transform:scaleX(1.0606)">Pulling image "gcr.io/s...</span>
<span class="t" style="left:2716.6px;top:1392.8px;font-size:28.78px;font-weight:400;color:#ffffff">P</span>
<span class="t" style="left:2575.8px;top:1460.9px;font-size:28.78px;font-weight:400;color:#62666f;transform:scaleX(0.8696)">16:37</span>
<span class="t" style="left:2750.3px;top:1460.9px;font-size:28.78px;font-weight:400;color:#4d5566;transform:scaleX(1.0925)">Created container gue...</span>
<span class="t" style="left:2716.6px;top:1460.9px;font-size:28.78px;font-weight:400;color:#ffffff">P</span>
<span class="t" style="left:2575.8px;top:1529.0px;font-size:28.78px;font-weight:400;color:#62666f;transform:scaleX(0.8696)">16:37</span>
<span class="t" style="left:2750.3px;top:1529.0px;font-size:28.78px;font-weight:400;color:#4d5566;transform:scaleX(1.0579)">Successfully pulled im...</span>
<span class="t" style="left:2716.6px;top:1529.0px;font-size:28.78px;font-weight:400;color:#ffffff">P</span>
<span class="t" style="left:2575.8px;top:1597.1px;font-size:28.78px;font-weight:400;color:#62666f;transform:scaleX(0.8696)">16:37</span>
<span class="t" style="left:2750.3px;top:1597.1px;font-size:28.78px;font-weight:400;color:#4d5566;transform:scaleX(1.097)">Started container com...</span>
<span class="t" style="left:2716.6px;top:1597.1px;font-size:28.78px;font-weight:400;color:#ffffff">P</span>
<span class="t" style="left:2575.8px;top:1665.2px;font-size:28.78px;font-weight:400;color:#62666f;transform:scaleX(0.8696)">16:37</span>
<span class="t" style="left:2750.3px;top:1665.2px;font-size:28.78px;font-weight:400;color:#4d5566;transform:scaleX(1.0579)">Successfully pulled im...</span>
<span class="t" style="left:2716.6px;top:1665.2px;font-size:28.78px;font-weight:400;color:#ffffff">P</span>
<span class="t" style="left:2575.8px;top:1733.3px;font-size:28.78px;font-weight:400;color:#62666f;transform:scaleX(0.8696)">16:37</span>
<span class="t" style="left:2751.4px;top:1733.3px;font-size:28.78px;font-weight:400;color:#4d5566;transform:scaleX(0.9167)">Add eth0 [192.168.194.15...</span>
<span class="t" style="left:2716.6px;top:1733.3px;font-size:28.78px;font-weight:400;color:#ffffff">P</span>
<span class="t" style="left:2575.8px;top:1801.4px;font-size:28.78px;font-weight:400;color:#62666f;transform:scaleX(0.8696)">16:37</span>
<span class="t" style="left:2749.3px;top:1801.4px;font-size:28.78px;font-weight:400;color:#4d5566;transform:scaleX(1.0606)">Pulling image "gcr.io/s...</span>
<span class="t" style="left:2716.6px;top:1801.4px;font-size:28.78px;font-weight:400;color:#ffffff">P</span>
<span class="t" style="left:2575.8px;top:1869.5px;font-size:28.78px;font-weight:400;color:#62666f;transform:scaleX(0.8696)">16:37</span>
<span class="t" style="left:2751.4px;top:1869.5px;font-size:28.78px;font-weight:400;color:#4d5566;transform:scaleX(1.0828)">AttachVolume.Attach ...</span>
<span class="t" style="left:2716.6px;top:1869.5px;font-size:28.78px;font-weight:400;color:#ffffff">P</span>
<span class="t" style="left:2575.8px;top:1937.6px;font-size:28.78px;font-weight:400;color:#62666f;transform:scaleX(0.8696)">16:37</span>
<span class="t" style="left:2779.5px;top:1937.6px;font-size:28.78px;font-weight:400;color:#4d5566;transform:scaleX(1.0514)">Created PodDisrupti...</span>
<span class="t" style="left:2717.1px;top:1937.6px;font-size:28.78px;font-weight:400;color:#ffffff;transform:scaleX(0.9592)">VMI</span>
<div style="position:absolute;left:2530px;top:1928px;width:652px;height:40px;background:linear-gradient(rgba(253,253,254,0.5),rgba(253,253,254,0.75) 40%,rgba(253,253,254,1))"></div>
<div style="position:absolute;left:2520px;top:1968px;width:672px;height:25px;background:#e7e7eb"></div>
<div style="position:absolute;left:2530px;top:1968px;width:652px;height:2px;background:linear-gradient(#d6d6dc,#e7e7eb)"></div>
<div style="position:absolute;left:3094px;top:1994px;width:96px;height:96px;border-radius:50%;background:#5f55b3;box-shadow:0 3px 10px rgba(0,0,0,0.18)"></div>
<svg style="position:absolute;left:3113px;top:2013px;" width="60" height="60" viewBox="0 0 60 60"><circle cx="24.2" cy="22.6" r="20.4" fill="none" stroke="#fff" stroke-width="4.6"/><path d="M13.5,28.3 Q24.5,35.5 35,28.3" fill="none" stroke="#fff" stroke-width="3.4" stroke-linecap="round"/><path d="M38.5,39.5 L51.5,51.8" stroke="#fff" stroke-width="7.5" stroke-linecap="round"/></svg>
</div></body></html>
